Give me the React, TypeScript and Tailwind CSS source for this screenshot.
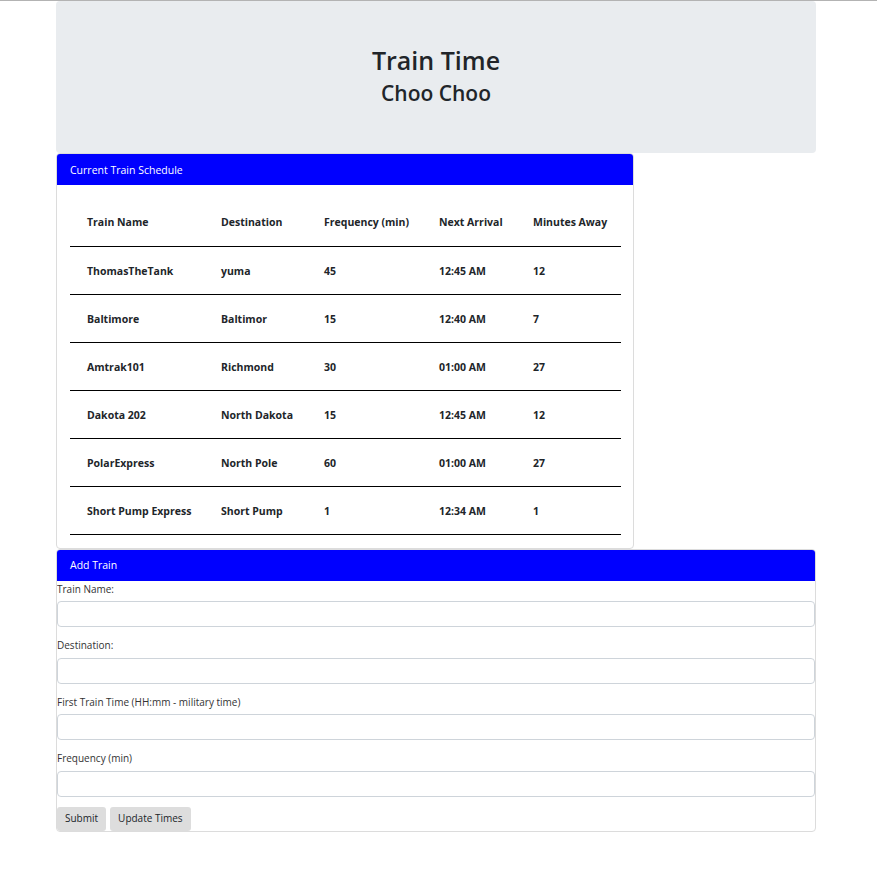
import * as React from "react";

const trains = [
  { name: "ThomasTheTank", dest: "yuma", freq: "45", next: "12:45 AM", away: "12" },
  { name: "Baltimore", dest: "Baltimor", freq: "15", next: "12:40 AM", away: "7" },
  { name: "Amtrak101", dest: "Richmond", freq: "30", next: "01:00 AM", away: "27" },
  { name: "Dakota 202", dest: "North Dakota", freq: "15", next: "12:45 AM", away: "12" },
  { name: "PolarExpress", dest: "North Pole", freq: "60", next: "01:00 AM", away: "27" },
  { name: "Short Pump Express", dest: "Short Pump", freq: "1", next: "12:34 AM", away: "1" },
];

const fields = [
  "Train Name:",
  "Destination:",
  "First Train Time (HH:mm - military time)",
  "Frequency (min)",
];

export default function App() {
  return (
    <div
      className="min-h-[875px] bg-white border-t border-[#b3b3b3] text-[#212529]"
      style={{ fontFamily: '"Open Sans", "Noto Sans", sans-serif' }}
    >
      <div className="ml-[56px] w-[760px]">
        <div className="h-[152px] bg-[#e9ecef] rounded-[4px] flex flex-col items-center pt-[44px]">
          <h1 className="text-[25px] font-semibold leading-[30px]">Train Time</h1>
          <h2 className="text-[21px] font-semibold leading-[30px] mt-[3px]">Choo Choo</h2>
        </div>

        <div className="w-[578px] border border-[#dcdcdc] rounded-[4px] overflow-hidden">
          <div className="h-[31px] bg-[#0000ff] text-white text-[10.5px] flex items-center pl-[13px] pt-[3px]">
            Current Train Schedule
          </div>
          <div className="pt-[13px] pl-[13px] pr-[12px] pb-[13px]">
            <table className="w-[551px] text-[10.5px] font-bold border-collapse">
              <thead>
                <tr className="h-[48px] border-b border-black">
                  <th className="w-[151px] text-left pl-[17px] font-bold pt-[3px]">Train Name</th>
                  <th className="w-[103px] text-left font-bold pt-[3px]">Destination</th>
                  <th className="w-[115px] text-left font-bold pt-[3px]">Frequency (min)</th>
                  <th className="w-[94px] text-left font-bold pt-[3px]">Next Arrival</th>
                  <th className="text-left font-bold pt-[3px]">Minutes Away</th>
                </tr>
              </thead>
              <tbody>
                {trains.map((t) => (
                  <tr key={t.name} className="h-[48px] border-b border-black">
                    <td className="pl-[17px] pt-[3px]">{t.name}</td>
                    <td className="pt-[3px]">{t.dest}</td>
                    <td className="pt-[3px]">{t.freq}</td>
                    <td className="pt-[3px]">{t.next}</td>
                    <td className="pt-[3px]">{t.away}</td>
                  </tr>
                ))}
              </tbody>
            </table>
          </div>
        </div>

        <div className="border border-[#dcdcdc] rounded-[4px] overflow-hidden">
          <div className="h-[31px] bg-[#0000ff] text-white text-[10.5px] flex items-center pl-[13px] pt-[2px]">
            Add Train
          </div>
          <div className="flex flex-col pt-[1px]">
            {fields.map((f) => (
              <div key={f} className="flex flex-col">
                <label className="text-[10px] leading-[15.5px] pb-[4px] text-[#333]">{f}</label>
                <input className="h-[26px] border border-[#ced4da] rounded-[4px] mb-[11px] bg-white" />
              </div>
            ))}
            <div className="flex gap-[4px] -mt-[1px]">
              <button className="h-[24px] px-[8px] bg-[#dddddd] rounded-[3px] text-[10px] text-[#212529]">
                Submit
              </button>
              <button className="h-[24px] px-[8px] bg-[#dddddd] rounded-[3px] text-[10px] text-[#212529]">
                Update Times
              </button>
            </div>
          </div>
        </div>
      </div>
    </div>
  );
}
